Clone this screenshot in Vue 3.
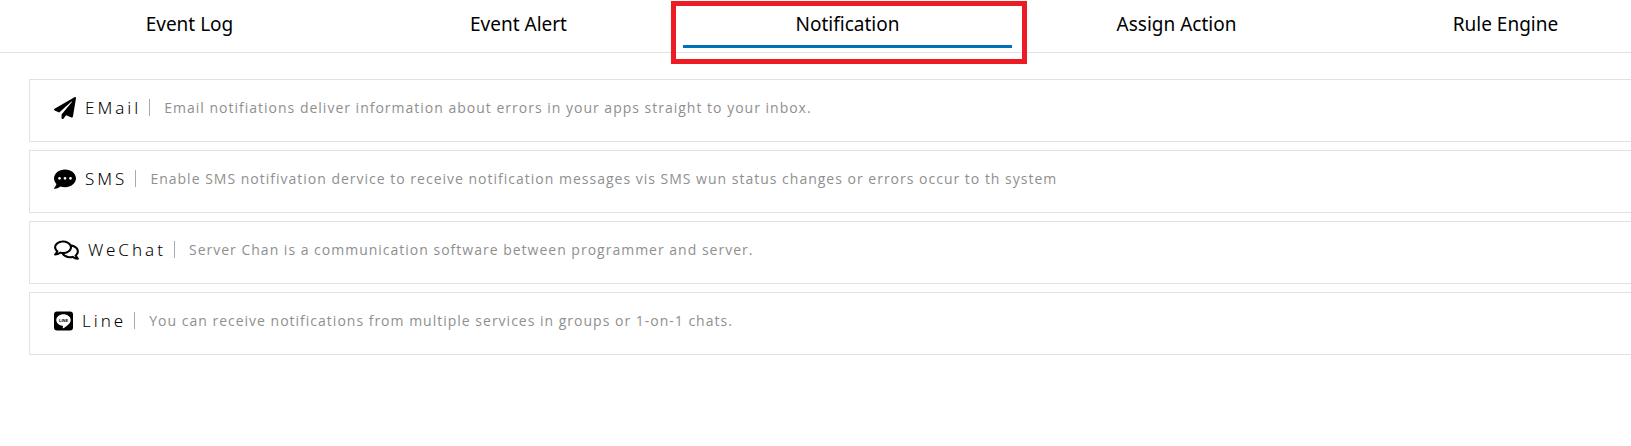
<script setup>
import { ref } from 'vue'

const tabs = ['Event Log', 'Event Alert', 'Notification', 'Assign Action', 'Rule Engine']
const active = ref('Notification')

const services = [
  {
    icon: 'email',
    title: 'EMail',
    text: 'Email notifiations deliver information about errors in your apps straight to your inbox.',
  },
  {
    icon: 'sms',
    title: 'SMS',
    text: 'Enable SMS notifivation dervice to receive notification messages vis SMS wun status changes or errors occur to th system',
  },
  {
    icon: 'wechat',
    title: 'WeChat',
    text: 'Server Chan is a communication software between programmer and server.',
  },
  {
    icon: 'line',
    title: 'Line',
    text: 'You can receive notifications from multiple services in groups or 1-on-1 chats.',
  },
]
</script>

<template>
  <div class="page">
    <nav class="tabs" role="tablist">
      <button
        v-for="tab in tabs"
        :key="tab"
        type="button"
        role="tab"
        class="tab"
        :class="{ active: tab === active }"
        :aria-selected="tab === active"
        @click="active = tab"
      >
        {{ tab }}
      </button>
    </nav>

    <main class="list">
      <section v-for="item in services" :key="item.title" class="card">
        <svg v-if="item.icon === 'email'" class="icon" viewBox="0 0 512 512" aria-hidden="true">
          <path d="M476 3.2L12.5 270.6c-18.1 10.4-15.8 35.6 2.2 43.2L121 358.4l287.3-253.2c5.5-4.9 13.3 2.6 8.6 8.3L176 407v80.5c0 23.6 28.5 32.9 42.5 15.8L282 426l124.6 52.2c14.2 6 30.4-2.9 33-18.2l72-432C515 7.8 493.3-6.8 476 3.2z" />
        </svg>
        <svg v-else-if="item.icon === 'sms'" class="icon" viewBox="0 0 512 512" aria-hidden="true">
          <path d="M256 32C114.6 32 0 125.1 0 240c0 49.6 21.4 95 57 130.7C44.5 421.1 2.7 466 2.2 466.5c-2.2 2.3-2.8 5.7-1.5 8.7S4.8 480 8 480c66.3 0 116-31.8 140.6-51.4 32.7 12.3 69 19.4 107.4 19.4 141.4 0 256-93.1 256-208S397.4 32 256 32zM128 272c-17.7 0-32-14.3-32-32s14.3-32 32-32 32 14.3 32 32-14.3 32-32 32zm128 0c-17.7 0-32-14.3-32-32s14.3-32 32-32 32 14.3 32 32-14.3 32-32 32zm128 0c-17.7 0-32-14.3-32-32s14.3-32 32-32 32 14.3 32 32-14.3 32-32 32z" />
        </svg>
        <svg v-else-if="item.icon === 'wechat'" class="icon wide" viewBox="0 0 576 512" aria-hidden="true">
          <path d="M532 386.2c27.5-27.1 44-61.1 44-98.2 0-80-76.5-146.1-176.2-157.9C368.3 72.5 294.3 32 208 32 93.1 32 0 103.6 0 192c0 37 16.5 71 44 98.2-15.3 30.7-37.3 54.5-37.7 54.9-6.3 6.7-8.1 16.5-4.4 25 3.6 8.5 12 14 21.2 14 53.5 0 96.7-20.2 125.2-38.8 9.2 2.1 18.7 3.7 28.4 4.9C208.1 407.6 281.8 448 368 448c20.8 0 40.8-2.4 59.8-6.8C456.3 459.7 499.4 480 553 480c9.2 0 17.5-5.5 21.2-14 3.6-8.5 1.9-18.3-4.4-25-.4-.3-22.5-24.1-37.8-54.8zm-392.8-92.3L122.1 305c-14.1 9.1-28.5 16.3-43.1 21.4 2.7-4.7 5.4-9.7 8-14.8l15.5-31.1L77.7 256C64.2 242.6 48 220.7 48 192c0-60.7 73.3-112 160-112s160 51.3 160 112-73.3 112-160 112c-16.5 0-33-1.9-49-5.6l-19.8-4.5zM498.3 352l-24.7 24.4 15.5 31.1c2.6 5.1 5.3 10.1 8 14.8-14.6-5.1-29-12.3-43.1-21.4l-17.1-11.1-19.9 4.6c-16 3.7-32.5 5.6-49 5.6-54 0-102.2-20.1-131.3-49.7C338 339.5 416 272.9 416 192c0-3.4-.4-6.7-.7-10C479.7 196.5 528 238.8 528 288c0 28.7-16.2 50.6-29.7 64z" />
        </svg>
        <svg v-else class="icon narrow" viewBox="0 0 19 19" aria-hidden="true">
          <rect width="19" height="19" rx="3" />
          <path fill="#fff" d="M9.5 2.8c-4 0-7.2 2.6-7.2 5.8 0 2.9 2.6 5.3 6 5.7.6.1.7.4.6 1l-.2 1.200c0 .4.2.5.6.3 2.300-1.300 7.400-4.400 7.400-8.200 0-3.200-3.200-5.800-7.200-5.800z" />
          <text x="9.500" y="10.200" class="mark">LINE</text>
        </svg>
        <h2 class="title">{{ item.title }}</h2>
        <span class="bar"></span>
        <p class="text">{{ item.text }}</p>
      </section>
    </main>
  </div>
</template>

<style>
body {
  margin: 0;
  background: #fff;
}
</style>

<style scoped>
.page {
  overflow: hidden;
  font-family: 'Noto Sans', 'Open Sans', sans-serif;
  color: #000;
}

.tabs {
  display: flex;
  margin-right: -39px;
  padding: 0 0 4px 25px;
  border-bottom: 1px solid #e2e2e2;
}

.tab {
  position: relative;
  flex: 1;
  height: 48px;
  padding: 0;
  border: 0;
  border-bottom: 3px solid transparent;
  background: none;
  color: inherit;
  font: 19px/48px 'Noto Sans', 'Open Sans', sans-serif;
  cursor: pointer;
}

.tab.active {
  border-bottom-color: #0070b8;
}

/* highlight frame round the selected tab */
.tab.active::after {
  content: '';
  position: absolute;
  inset: 1px -15px -19px -12px;
  border: 5px solid #ed1c24;
}

.list {
  display: grid;
  gap: 8px;
  margin: 26px -20px 0 29px;
}

.card {
  display: flex;
  align-items: center;
  padding: 15px 24px 21px;
  border: 1px solid #e2e2e2;
}

.icon {
  flex: none;
  width: 22px;
  height: 22px;
}

.icon.wide {
  width: 25px;
}

.icon.narrow {
  width: 19px;
}

.mark {
  fill: #000;
  font: 700 4px 'Liberation Sans', sans-serif;
  text-anchor: middle;
}

.title {
  margin: 0 8px 0 9px;
  font-size: 17px;
  font-weight: 300;
  line-height: 25px;
  letter-spacing: 3px;
}

.bar {
  width: 1px;
  height: 17px;
  background: #aaa;
}

.text {
  margin: 0 0 0 14px;
  color: #8f8f8f;
  font-family: 'Open Sans', 'Noto Sans', sans-serif;
  font-size: 14px;
  line-height: 25px;
  letter-spacing: 1px;
  white-space: nowrap;
}
</style>
